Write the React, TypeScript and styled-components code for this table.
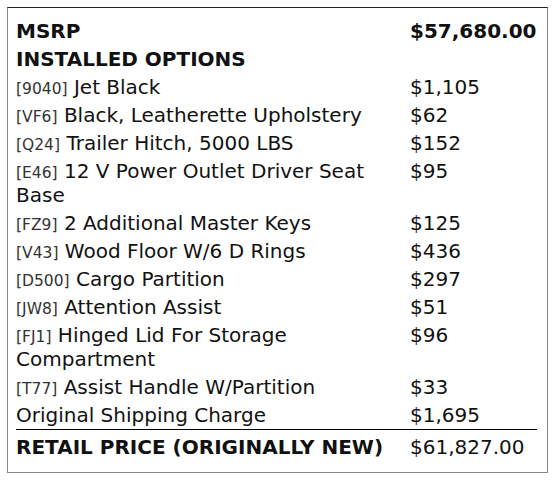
import React from "react";
import styled, { createGlobalStyle } from "styled-components";

const Global = createGlobalStyle`
  html, body { margin: 0; padding: 0; background: #fff; }
  body { padding: 7px 0 0 7px; font-family: "DejaVu Sans", "Liberation Sans", sans-serif; color: #111; }
`;

const Box = styled.div`
  box-sizing: border-box;
  width: 541px;
  border: 1px solid #888;
  border-top-color: #222;
  padding: 9px 11px 11px 8px;
`;

const Grid = styled.div`
  display: grid;
  grid-template-columns: 379px 1fr;
  column-gap: 15px;
`;

const Cell = styled.div<{ $bold?: boolean; $padTop?: number }>`
  font-size: 20px;
  line-height: 24px;
  padding: ${(p) => p.$padTop ?? 2}px 0 2px;
  font-weight: ${(p) => (p.$bold ? 700 : 400)};
`;

const Code = styled.span`
  font-size: 15.5px;
  line-height: 1;
  color: #333;
`;

const Rule = styled.div`
  grid-column: 1 / -1;
  height: 1px;
  background: #000;
`;

type Item = { code?: string; name: string; price: string };

const items: Item[] = [
  { code: "9040", name: "Jet Black", price: "$1,105" },
  { code: "VF6", name: "Black, Leatherette Upholstery", price: "$62" },
  { code: "Q24", name: "Trailer Hitch, 5000 LBS", price: "$152" },
  { code: "E46", name: "12 V Power Outlet Driver Seat Base", price: "$95" },
  { code: "FZ9", name: "2 Additional Master Keys", price: "$125" },
  { code: "V43", name: "Wood Floor W/6 D Rings", price: "$436" },
  { code: "D500", name: "Cargo Partition", price: "$297" },
  { code: "JW8", name: "Attention Assist", price: "$51" },
  { code: "FJ1", name: "Hinged Lid For Storage Compartment", price: "$96" },
  { code: "T77", name: "Assist Handle W/Partition", price: "$33" },
  { name: "Original Shipping Charge", price: "$1,695" },
];

export default function App() {
  return (
    <>
      <Global />
      <Box>
        <Grid>
          <Cell $bold>MSRP</Cell>
          <Cell $bold>$57,680.00</Cell>
          <Cell $bold>INSTALLED OPTIONS</Cell>
          <Cell />
          {items.map((it) => (
            <React.Fragment key={it.name}>
              <Cell>
                {it.code && <Code>[{it.code}]</Code>}
                {it.code ? " " : ""}
                {it.name}
              </Cell>
              <Cell>{it.price}</Cell>
            </React.Fragment>
          ))}
          <Rule />
          <Cell $bold $padTop={5}>RETAIL PRICE (ORIGINALLY NEW)</Cell>
          <Cell $padTop={5}>$61,827.00</Cell>
        </Grid>
      </Box>
    </>
  );
}
